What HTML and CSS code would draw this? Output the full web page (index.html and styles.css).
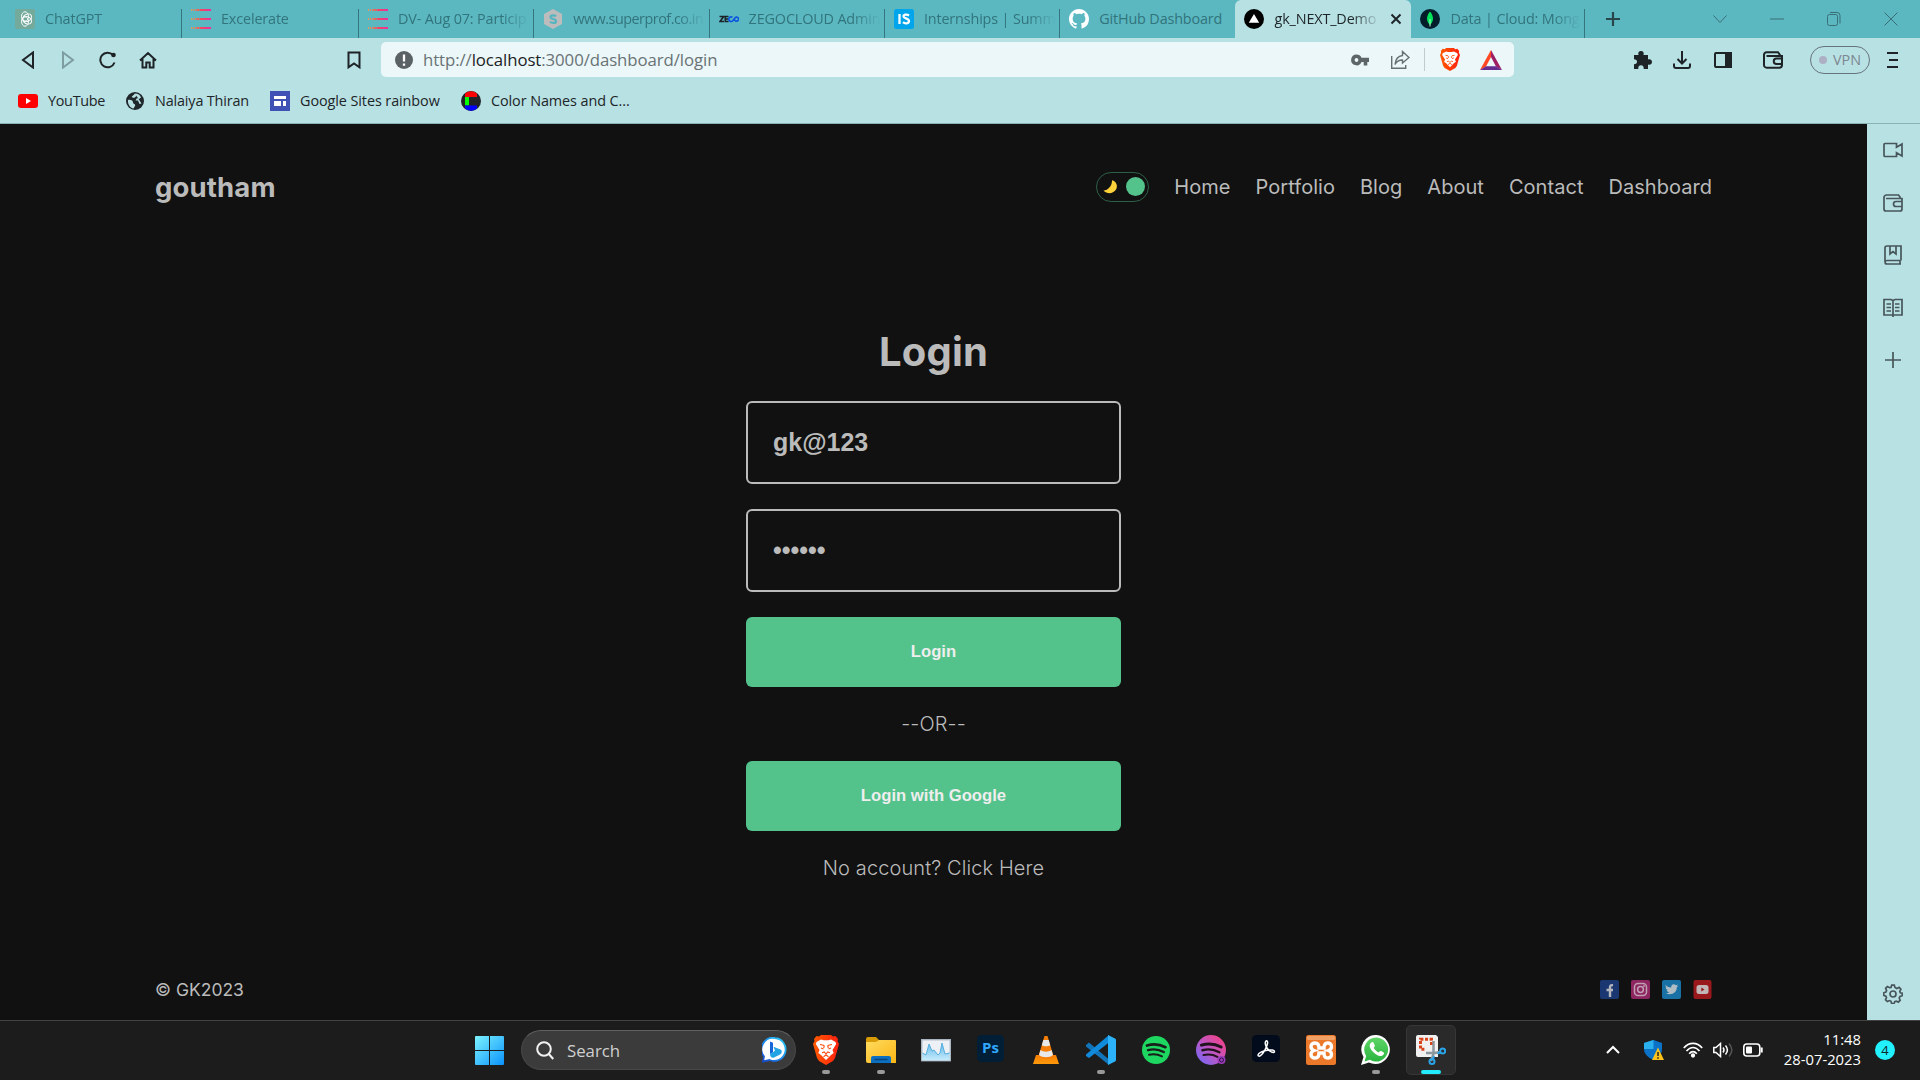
FILE: index.html
```html
<!DOCTYPE html>
<html lang="en">
<head>
<meta charset="utf-8">
<title>gk_NEXT_Demo</title>
<link rel="stylesheet" href="styles.css">
</head>
<body>
<svg class="defs" width="0" height="0" aria-hidden="true">
  <defs>
    <linearGradient id="bars"><stop offset="0" stop-color="#f09a50"/><stop offset=".5" stop-color="#f4475c"/><stop offset="1" stop-color="#ee2da0"/></linearGradient>
    <linearGradient id="win" x2="1" y2="1"><stop offset="0" stop-color="#7cf3ff"/><stop offset="1" stop-color="#0a92fb"/></linearGradient>
    <linearGradient id="brave"><stop offset="0" stop-color="#ff5a00"/><stop offset="1" stop-color="#ff1f10"/></linearGradient>
    <linearGradient id="folder" x2="1" y2="1"><stop offset="0" stop-color="#ffdb60"/><stop offset="1" stop-color="#fbb614"/></linearGradient>
    <linearGradient id="spot" x1="0" y1="1" x2="1" y2="0"><stop offset="0" stop-color="#6b6bff"/><stop offset=".5" stop-color="#c055c0"/><stop offset="1" stop-color="#ff3d78"/></linearGradient>
    <linearGradient id="bing" x1="1" y1="0" x2="0" y2="1"><stop offset="0" stop-color="#2bd0f0"/><stop offset=".5" stop-color="#1e8cf0"/><stop offset="1" stop-color="#1745c8"/></linearGradient>
    <linearGradient id="cone" x2="0" y2="1"><stop offset="0" stop-color="#f57c00"/><stop offset="1" stop-color="#ff9a0c"/></linearGradient>
    <linearGradient id="perf" x2="0" y2="1"><stop offset="0" stop-color="#5eb7e8"/><stop offset="1" stop-color="#c8ecfb"/></linearGradient>
    <linearGradient id="wa" x2="0" y2="1"><stop offset="0" stop-color="#5fd566"/><stop offset="1" stop-color="#2bb540"/></linearGradient>
    <symbol id="stack" viewBox="0 0 20 20"><g fill="url(#bars)"><path d="M0 0h1v2H0zM2 0h1v2H2zM4 0h1.5v2H4zM6 0h2v2H6zM8.500 0H20v2H8.500zM0 9h1v2H0zM2 9h1v2H2zM4 9h1.500v2H4zM6 9h2v2H6zM8.500 9H20v2H8.500zM0 18h1v2H0zM2 18h1v2H2zM4 18h1.500v2H4zM6 18h2v2H6zM8.500 18H20v2H8.500z"/></g></symbol>
    <symbol id="lion" viewBox="0 0 26 30"><path d="M6 1.500 8 0h10l2 1.500 2.500-.5L25 4l-.5 2 1.500 3-4 14-2 3-7 4-7-4-2-3L0 9l1.500-3L1 4l2.500-3z" fill="url(#brave)"/><path d="M8 4.500 3.500 7 2.800 9l3.700 6-1.200 3 2.700 2 5 5 5-5 2.700-2-1.200-3 3.700-6-.7-2L18 4.500l-2.500.8h-5z" fill="#fff"/><path d="m7 9.500 3.500.7.700.8-.5 2M19 9.500l-3.500.7-.7.800.5 2M8 13l2.500 1M18 13l-2.500 1M9 17.700l2.200-.7L13 19l1.800-2 2.200.7M10.500 21.700 13 20l2.500 1.700" fill="none" stroke="#ff4a0a" stroke-width="1.100"/></symbol>
    <symbol id="waves" viewBox="0 0 28 28"><path d="M5 9.500c6-1.800 13-1.200 18.500 1.700" stroke-width="2.700"/><path d="M6 14.200c5-1.300 11-.8 15.800 1.900" stroke-width="2.300"/><path d="M7 18.700c4.500-1 9-.5 13 1.700" stroke-width="1.900"/></symbol>
  </defs>
</svg>

<div class="tabs">
  <div class="tab first"><svg width="20" height="20"><rect width="20" height="20" rx="2" fill="#74aa9c"/><g fill="none" stroke="#fff" stroke-width="1"><ellipse cx="10" cy="7.500" rx="3.500" ry="4.700"/><ellipse cx="10" cy="7.500" rx="3.500" ry="4.700" transform="rotate(60 10 10)"/><ellipse cx="10" cy="7.500" rx="3.500" ry="4.700" transform="rotate(120 10 10)"/><ellipse cx="10" cy="12.500" rx="3.500" ry="4.700"/></g></svg><span>ChatGPT</span></div>
  <div class="tab second"><svg width="20" height="20"><use href="#stack"/></svg><span>Excelerate</span></div>
  <div class="tab"><svg width="20" height="20"><use href="#stack"/></svg><span>DV- Aug 07: Particip</span></div>
  <div class="tab tight"><svg width="20" height="20"><path d="m10 0 9 5v10l-9 5-9-5V5z" fill="#bcbcbc"/><path d="M13 7.300c-1-1-5.500-1.500-5.500.8S13 9.700 13 12.200s-4.500 2-6 .6" fill="none" stroke="#54b4bf" stroke-width="2.200"/></svg><span>www.superprof.co.in</span></div>
  <div class="tab"><svg width="20" height="20" fill="none" stroke-width="1.600"><path d="M.5 7.500h4.200L1 12.500h4M9.500 7.500H6.300v5h3.200M6.300 10h3" stroke="#1b2327"/><path d="M13.500 8.300a2.300 2.300 0 1 0 .5 3.200l2-2.600a2 2 0 1 1 0 2.500l-1.500-2" stroke="#0b55e0"/></svg><span>ZEGOCLOUD Admin</span></div>
  <div class="tab"><svg width="20" height="20"><rect width="20" height="20" rx="2.500" fill="#00a5ec"/><path d="M5.500 5v10M15 6.500c-2-1.500-5.500-1-5.500 1s5.500 1.800 5.500 4.500-4 3-6 1.200" fill="none" stroke="#fff" stroke-width="2.300"/></svg><span>Internships | Summe</span></div>
  <div class="tab last-before"><svg width="20" height="20" viewBox="0 0 16 16"><path fill="#fff" d="M8 0C3.580 0 0 3.580 0 8c0 3.540 2.290 6.530 5.470 7.590.4.070.55-.17.55-.38 0-.19-.01-.82-.01-1.490-2.010.37-2.530-.49-2.690-.94-.09-.23-.48-.94-.82-1.130-.28-.15-.68-.52-.01-.53.63-.01 1.080.58 1.230.82.72 1.210 1.870.87 2.330.66.070-.52.28-.87.51-1.070-1.780-.2-3.640-.89-3.640-3.950 0-.87.31-1.590.82-2.150-.08-.2-.36-1.020.08-2.120 0 0 .67-.21 2.200.82.640-.18 1.320-.27 2-.27s1.360.090 2 .27c1.530-1.040 2.200-.82 2.200-.82.440 1.100.16 1.920.080 2.120.510.560.82 1.270.82 2.150 0 3.070-1.870 3.750-3.650 3.950.290.250.54.730.54 1.480 0 1.070-.01 1.930-.01 2.200 0 .210.150.460.550.380A8.010 8.010 0 0 0 16 8c0-4.420-3.580-8-8-8"/></svg><span>GitHub Dashboard</span></div>
  <div class="tab active"><svg width="20" height="20"><circle cx="10" cy="10" r="10"/><path d="m10 5 5.200 8.700H4.800z" fill="#fff"/></svg><span>gk_NEXT_Demo</span><svg class="close" width="12" height="12"><path d="m1.500 1.500 9 9m0-9-9 9" stroke="#1d2528" stroke-width="2"/></svg></div>
  <div class="tab after"><svg width="20" height="20"><circle cx="10" cy="10" r="10" fill="#021e2b"/><path d="M10 2.500c4 5 4 9.500 0 13.500-4-4-4-8.500 0-13.500" fill="#00e45a"/><path d="M10 10v7.500" stroke="#b8f5cf"/></svg><span>Data | Cloud: Mong</span></div>
  <svg class="plus" width="16" height="16"><path d="M8 1v14M1 8h14" stroke="#28464c" stroke-width="2.200"/></svg>
  <div class="window-controls"><svg width="14" height="20"><path d="m.5 6.500 6.500 7 6.500-7"/></svg><svg width="14" height="20"><path d="M0 10h14"/></svg><svg width="14" height="20"><rect x=".5" y="5.500" width="10" height="11" rx="2"/><path d="M3 3.500h7a3 3 0 0 1 3 3v8"/></svg><svg width="14" height="20"><path d="m.5 3.500 13 13m0-13-13 13"/></svg></div>
</div>

<div class="toolbar">
  <svg class="back" width="14" height="18"><path d="M12 1.500v15L2 9z"/></svg>
  <svg class="forward" width="14" height="18"><path d="M2 1.500v15L12 9z"/></svg>
  <svg class="reload" width="18" height="18"><path d="M15.500 11.500A7.300 7.300 0 1 1 14 4" /><circle cx="14.500" cy="4" r="2.300" fill="#1d2326" stroke="none"/></svg>
  <svg class="home" width="18" height="18"><path d="M1 9.500 9 2l8 7.500M3.500 8v8.500h3.800v-5h3.400v5h3.800V8"/></svg>
  <svg class="save" width="14" height="18"><path d="M1.500 1.500h11v14.800L7 12.500l-5.500 3.800z"/></svg>
  <div class="address">
    <svg width="18" height="18"><circle cx="9" cy="9" r="9" fill="#5b6266"/><path d="M9 3.500v7M9 12.500v2.300" stroke="#fff" stroke-width="2.300"/></svg>
    <div class="url">http://<b>localhost</b>:3000/dashboard/login</div>
    <svg class="key" width="18" height="12"><path fill="#5e6569" fill-rule="evenodd" d="M5.500.5a5.400 5.400 0 0 1 5 3.300H18V8h-1.700v3.500h-3.600V8h-2.200a5.400 5.400 0 1 1-5-7.500m0 3.600a1.900 1.900 0 1 0 0 3.800 1.900 1.900 0 0 0 0-3.800"/></svg>
    <svg class="share" width="19" height="19"><path d="M.7 6v12.300h14V15M11.500 1.500l6.500 6-6.500 5.500V10c-3.500 0-6 1.500-7.500 4.500.5-5 3-8.500 7.500-9z"/></svg>
    <i></i>
    <svg class="shield" width="20" height="23" viewBox="0 0 26 30"><use href="#lion"/></svg>
    <svg class="bat" width="22" height="20"><path d="M11 0 0 20l6-3.500L11 7z" fill="#ff4724"/><path d="m11 0 11 20-6-3.500L11 7z" fill="#9e1f63"/><path d="M0 20h22l-6-3.700H6z" fill="#662d91"/></svg>
  </div>
  <svg class="puzzle" width="19" height="18"><path fill="#1d2326" d="M1 4h4.500C4.700 1.500 6 0 8 0s3.300 1.500 2.500 4H15v4.500c2.300-.8 4 .5 4 2.500s-1.700 3.200-4 2.500V18h-4.300c.3-2.300-.7-3.800-2.700-3.800S5 15.700 5.300 18H1v-4.800c2-.2 3-1 3-2.500S3 8.500 1 8.300z"/></svg>
  <svg class="download" width="18" height="18"><path d="M9 0v12M4.500 8 9 12.500 13.500 8M1 12.500V15a2 2 0 0 0 2 2h12a2 2 0 0 0 2-2v-2.500"/></svg>
  <svg class="panel" width="18" height="16"><rect x="1" y="1" width="16" height="14" rx="1"/><path d="M12 1h5v14h-5z" fill="#1d2326"/></svg>
  <svg class="wallet" width="20" height="18"><path d="M17 5.500V4L15 1.200H3.500A2.500 2.500 0 0 0 1 3.700V14a2.700 2.700 0 0 0 2.700 2.700h12.600A2.700 2.700 0 0 0 19 14V5H3.500M19 7.500h-5.500a2.700 2.700 0 0 0 0 5.500H19"/></svg>
  <div class="vpn"><i></i>VPN</div>
  <svg class="menu" width="12" height="18"><path d="M0 2h11M2 9h9M0 16h11"/></svg>
</div>

<div class="bookmarks">
  <div class="b1"><svg width="20" height="20"><rect y="3" width="20" height="14" rx="3" fill="#f00"/><path d="m8 7 5 3-5 3z" fill="#fff"/></svg>YouTube</div>
  <div class="b2"><svg width="18" height="18"><circle cx="9" cy="9" r="9" fill="#20272b"/><path d="M2 8c3-.5 5 .5 5 2.500s3 1 2 3.500l-1.500 2.500C4 16 1.500 12 2 8M9 1.500c3 0 5 1.500 6 4l-2 1.500-2-1-1.500 2.500H12L13.500 12l2-.5M9 1.500 10.500 4 8 6 5.500 5" fill="#b8e1e4"/></svg>Nalaiya Thiran</div>
  <div class="b3"><svg width="20" height="20"><path d="M0 0h20v20H0z" fill="#3f51b5"/><path d="M4 5h12v3H4zM4 10h7v5H4zM13 10h3v5h-3z" fill="#fff"/></svg>Google Sites rainbow</div>
  <div class="b4"><svg width="20" height="20"><circle cx="10" cy="10" r="10" fill="#202226"/><path d="M4 2.500A10 10 0 0 1 16 2.500V6H4z" fill="#f00"/><path d="M4 6h4v8.500H4z" fill="#0f0"/><path d="M4 14.500h12v3a10 10 0 0 1-12 0z" fill="#00f"/></svg>Color Names and C...</div>
</div>

<main class="view">
  <div class="page">
    <header class="nav">
      <a class="logo">goutham</a>
      <nav>
        <div class="toggle"><svg width="15" height="14"><path d="M9 .3c4.500 1 6.300 6 3.700 9.800C9.800 14 4 14.300.5 10.500c4 .3 8.800-4.500 8.500-10.200" fill="#fdd13a"/></svg><i></i></div>
        <a>Home</a><a>Portfolio</a><a>Blog</a><a>About</a><a>Contact</a><a>Dashboard</a>
      </nav>
    </header>
    <section class="login">
      <h1>Login</h1>
      <input type="text" value="gk@123">
      <input type="password" value="gk1234">
      <button>Login</button>
      <p>--OR--</p>
      <button>Login with Google</button>
      <p>No account? Click Here</p>
    </section>
    <footer>
      <div>© GK2023</div>
      <div class="social">
        <svg width="19" height="19"><rect width="19" height="19" rx="2" fill="#1b3772"/><path d="M10 17V7.500c0-2 .8-2.500 3-2.300M6.500 10H13" fill="none" stroke="#b4b6bd" stroke-width="2.400"/></svg>
        <svg width="19" height="19"><rect width="19" height="19" rx="2" fill="#8d2560"/><g fill="none" stroke="#c0a0b2" stroke-width="1.500"><rect x="3.500" y="3.500" width="12" height="12" rx="3.500"/><circle cx="9.500" cy="9.500" r="2.900"/></g><circle cx="13" cy="6" r=".9" fill="#c0a0b2"/></svg>
        <svg width="19" height="19"><rect width="19" height="19" rx="2" fill="#1870a4"/><path d="M3.500 5c1.500 1.700 3.500 2.500 5.700 2.500C9 4.500 12 3.500 13.800 5.200l2-.7-1 1.700 1.400-.3-1.500 1.600c.2 5-5 8.500-11 5.800 1.500 0 2.700-.4 3.500-1.100-1.500-.2-2.200-1-2.500-2l1.200-.1C4.300 9.500 3.700 8.500 3.700 7.300l1.200.3C3.700 6.800 3.300 6 3.500 5" fill="#b0bdc5"/></svg>
        <svg width="19" height="19"><rect x=".5" width="18" height="19" rx="2" fill="#98181c"/><rect x="3.500" y="5" width="12" height="9" rx="2.500" fill="#c2b6b7"/><path d="M8.300 7.500v4l3.200-2z" fill="#98181c"/></svg>
      </div>
    </footer>
  </div>
  <aside>
    <svg width="20" height="20"><path d="M1 4.500a1 1 0 0 1 1-1h11.500v3.800L19 4v12l-5.500-3.300v3.800H2a1 1 0 0 1-1-1z"/></svg>
    <svg width="20" height="20"><path d="M17 5.500V4l-1.500-2H3.500A2.500 2.500 0 0 0 1 4.500V16a2 2 0 0 0 2 2h14a2 2 0 0 0 2-2V5.500H3M19 8.500h-6a2.500 2.500 0 0 0 0 5h6"/></svg>
    <svg width="20" height="20"><path d="M18 15.500V1H4a2 2 0 0 0-2 2v14a2 2 0 0 0 2 2h14M17 19v-3.500H4a2 2 0 0 0-2 1.800M7 1v8l3-2.500L13 9V1"/></svg>
    <svg width="20" height="20"><path d="M10 19v-2H1V1.500h7l2 1 2-1h7V17h-9M10 3v14M3.500 6H8M3.500 9.500H8M3.500 13H8M12 6h4.500M12 9.500h4.500M12 13h4.500"/></svg>
    <svg width="20" height="20"><path d="M10 2v16M2 10h16"/></svg>
    <svg class="gear" width="20" height="20"><circle cx="10" cy="10" r="3"/><path d="M8 3.500 8.700 1.200h2.600L12 3.500l1.800 1 2.300-1.100 1.800 1.800L16.800 7.400l.5 1.300 2 .5v2.500l-2.300.8-.8 1.500 1 2.200-1.900 1.900-2.100-1-1.500.6-.7 2H8.700L8 17.300l-1.500-.7-2.200 1-1.800-1.800 1-2.300-.6-1.400-2.200-.7V8.800l2.200-.7.7-1.500-1-2.300 1.800-1.700 2.200 1.100z"/></svg>
  </aside>
</main>

<div class="taskbar">
  <svg class="start" width="29" height="29"><path fill="url(#win)" d="M1 0h13v14H0V1a1 1 0 0 1 1-1M15 0h13a1 1 0 0 1 1 1v13H15zM0 15h14v14H1a1 1 0 0 1-1-1zM15 15h14v13a1 1 0 0 1-1 1H15z"/></svg>
  <div class="search"><svg width="18" height="19"><circle cx="8" cy="8" r="6.800" fill="none" stroke="#f2f2f2" stroke-width="2"/><path d="m12.800 13 4.500 5" stroke="#f2f2f2" stroke-width="2.200"/></svg><span>Search</span>
    <svg class="bing" width="26" height="26"><path d="M13 1a11.500 11.500 0 1 1-5.500 22L1 24.500l1-5A11.500 11.500 0 0 1 13 1" fill="#fff" stroke="url(#bing)" stroke-width="1.800"/><path d="m8 4.500 3 1.200v9.500L8 17z" fill="#1764d8"/><path d="m8 17 5-3.200-1.500-4 7 2.700c2 1 1.500 4-.5 5L12 20.500c-2 1-4-1-4-3.500" fill="#25a4e4"/></svg>
  </div>
  <div class="apps">
    <div class="run"><svg width="26" height="30" viewBox="0 0 26 30"><use href="#lion"/></svg></div>
    <div class="run"><svg width="30" height="30"><path d="M0 4a2 2 0 0 1 2-2h8l3 3h15v8H0z" fill="#d89a05"/><path d="M0 7h10l3-2h16a1 1 0 0 1 1 1v22H2a2 2 0 0 1-2-2z" fill="url(#folder)"/><path d="M5 28v-5a2 2 0 0 1 2-2h16a2 2 0 0 1 2 2v5z" fill="#0d6fc0"/><path d="M8.500 24.500h13" stroke="#07447c" stroke-width="1.500"/></svg></div>
    <div><svg width="30" height="30"><rect x=".7" y="4.700" width="28.600" height="21" fill="#edf1f5" stroke="#aab5c2" stroke-width="1.400"/><path d="M1.500 18 5 20l3-11 3 7 2-1 4 5 2-2 2-10 3 11 4.500-1v7.500h-27z" fill="url(#perf)"/><path d="M1.500 18 5 20l3-11 3 7 2-1 4 5 2-2 2-10 3 11 4.500-1" fill="none" stroke="#58aee0"/></svg></div>
    <div><div class="ps">Ps</div></div>
    <div><svg width="26" height="30"><path d="M3 20h20l3 9H0z" fill="url(#cone)"/><path d="M11.500 1h3l6 20c-2 4-13 4-15 0z" fill="#f47e08"/><path d="m10.300 5 5.400 0 1.500 5.200c-2 1.500-6.500 1.500-8.400 0zM7.500 15c3 2.200 8 2.200 11 0l1.500 5c-3 3-11 3-14 0z" fill="#e8e8e8"/></svg></div>
    <div class="run"><svg width="30" height="30"><path d="m0 10 3-2.500 20 17V30L0 11.500z" fill="#1275ba"/><path d="M0 19.500V21l3 2L23 7.500V0z" fill="#108ada"/><path d="m22 0 7 3.500a2 2 0 0 1 1 1.500v20a2 2 0 0 1-1 1.500L22 30z" fill="#2cb2f8"/></svg></div>
    <div><svg width="28" height="28"><circle cx="14" cy="14" r="14" fill="#1ed760"/><g fill="none" stroke="#181e1a" stroke-linecap="round"><use href="#waves"/></g></svg></div>
    <div><svg width="30" height="30"><circle cx="15" cy="15" r="15" fill="url(#spot)"/><g fill="none" stroke="#20131d" stroke-linecap="round"><use href="#waves" width="30" height="30"/></g><circle cx="25.500" cy="25" r="4" fill="#9c3bbb"/><circle cx="25.500" cy="25" r="2" fill="none" stroke="#301345"/></svg></div>
    <div><svg class="lift" width="28" height="28"><rect width="28" height="27" rx="4.500" fill="#020b1c"/><path d="M6 20c0-2 5-4 9-4.700 4-.6 7.500-.3 7.500 1.200s-3 1-5-.7c-2.500-2-5-6-4-9 .7-2 2.500-.8 2 1.700-.8 4-4.200 10.500-7 12.200C7.300 21.500 6 21.300 6 20z" fill="none" stroke="#fff" stroke-width="1.500"/></svg></div>
    <div><svg width="30" height="30"><rect width="30" height="30" rx="2.500" fill="#ec7829"/><rect x="1" y="1" width="28" height="4" rx="1.500" fill="#f1a066"/><path d="M13 13c0-7-8-6-8-1.500 0 2 1.500 3.500 3 4-1.500.5-3 2-3 4 0 4.500 8 5.500 8-1.500h5c0 7 7.500 6 7.500 1.500 0-2-1.500-3.500-3-4 1.500-.5 3-2 3-4 0-4.500-7.500-5.500-7.500 1.500z" fill="none" stroke="#fff" stroke-width="3.400"/></svg></div>
    <div class="run"><svg width="30" height="30"><path d="M15.500 0A14.500 14.500 0 1 1 8 27.500L0 30l2.500-8A14.500 14.500 0 0 1 15.500 0" fill="#fff"/><path d="M15.500 2.500A12 12 0 1 1 9 24.800l-5.500 1.700L5.200 21A12 12 0 0 1 15.500 2.500" fill="url(#wa)"/><path d="M10.500 7.500c-3 2-2 5.500 1.500 9.300s8 6 10.500 2.700c1-1.300.5-1.800-.5-2.500l-2-1c-1-.5-1.500.8-2.300 1.400-2-.7-4-2.700-5-4.700.7-.8 1.500-1.400 1-2.500l-1-2.300c-.4-.9-1.200-1-2.200-.4" fill="#fff"/></svg></div>
    <div class="current"><svg width="30" height="30"><path d="M2 0h18l2 2v20H2a2 2 0 0 1-2-2V2a2 2 0 0 1 2-2" fill="#f1f1f1"/><path d="M15.500 10V4.300H4.500v10H9" fill="none" stroke="#d9431a" stroke-width="3" stroke-dasharray="3 1.600"/><path d="M17.500 6v13L15 26M10 18h8.500l6-1" fill="none" stroke="#8c979e" stroke-width="2.500"/><g fill="none" stroke="#2aa4e8" stroke-width="2"><circle cx="16" cy="26.500" r="2.500"/><circle cx="26.700" cy="16" r="2.500"/><path d="m17 24 1-3M21.500 18.500l3-1"/></g></svg></div>
  </div>
  <div class="tray">
    <svg class="chev" width="14" height="10"><path d="m1 8 6-6 6 6" fill="none" stroke="#fff" stroke-width="2"/></svg>
    <svg class="def" width="20" height="21"><path d="M9.500 0 18 3v6c0 5-3 8.500-8.500 11C4 17.500 0 14 0 9V3z" fill="#0b72c8"/><path d="M9.500 0v9H0V3z" fill="#2bb0ee"/><path d="m14 7.500 6 12.500H8z" fill="#fcc21b"/><path d="M14 12v4M14 17.300v1.500" stroke="#222" stroke-width="1.500"/></svg>
    <svg class="wifi" width="20" height="16" fill="none" stroke="#fff" stroke-width="1.700"><path d="M.8 6C6-.2 14-.2 19.200 6M3.500 9C7.500 4.300 12.500 4.300 16.500 9M6.200 11.700c2.300-2.800 5.300-2.800 7.600 0"/><circle cx="10" cy="13.500" r="1.300" fill="#fff"/></svg>
    <svg class="sound" width="20" height="16" fill="none" stroke="#fff" stroke-width="1.500"><path d="M.8 5.500H3L7.500 1.500v13L3 10.500H.8z"/><path d="M10 5.500c1.200 1.500 1.200 3.500 0 5M12.500 3.500c2.300 2.700 2.300 6.300 0 9"/><path d="M16 1.500c3.500 4 3.500 9 0 13" stroke="#555"/></svg>
    <svg class="bat2" width="20" height="14"><rect x=".8" y="1" width="16" height="12" rx="3" fill="none" stroke="#fff" stroke-width="1.600"/><rect x="3" y="3.500" width="6" height="7" rx="1" fill="#fff"/><path d="M18.700 4.500v5" stroke="#fff" stroke-width="2"/></svg>
    <div class="clock"><div>11:48</div><div>28-07-2023</div></div>
    <div class="count">4</div>
  </div>
</div>
</body>
</html>
```
FILE: styles.css
```css
* { box-sizing: border-box; }
body { margin: 0; width: 1920px; height: 1080px; overflow: hidden; display: flex; flex-direction: column; background: #111; font-family: "Open Sans", "Noto Sans", sans-serif; font-size: 14.400px; }
.defs { position: absolute; }
svg { display: block; flex: none; }

/* tab strip */
.tabs { height: 38px; background: #5bb8c1; display: flex; align-items: center; }
.tab { width: 175.300px; height: 38px; padding: 0 4px 0 9px; display: flex; align-items: center; gap: 10px; color: #32747c; position: relative; letter-spacing: -.15px; }
.tab span { flex: 1; overflow: hidden; white-space: nowrap; padding-bottom: 2px; -webkit-mask-image: linear-gradient(90deg, #000 calc(100% - 28px), transparent); mask-image: linear-gradient(90deg, #000 calc(100% - 28px), transparent); }
.tab::after { content: ""; position: absolute; right: 0; top: 9px; width: 1px; height: 29px; background: #35757d; }
.tab.first { width: 182px; padding-left: 15px; }
.tab.second { width: 177px; }
.tab.tight { letter-spacing: -.5px; }
.tab.last-before::after, .tab.active::after { display: none; }
.tab.last-before span { -webkit-mask-image: none; mask-image: none; }
.tab.active { width: 176px; background: #b8e1e4; color: #1d2528; border-radius: 6px 6px 0 0; padding-right: 9px; }
.tab.after { width: 174px; }
.plus { margin-left: 20px; }
.window-controls { margin-left: auto; padding-right: 22px; display: flex; gap: 43px; }
.window-controls svg { fill: none; stroke: #3a6f77; }

/* navigation row */
.toolbar { height: 43px; background: #b8e1e4; display: flex; align-items: center; padding-left: 21px; }
.toolbar > svg { fill: none; stroke: #1d2326; stroke-width: 2; }
.toolbar .forward { margin-left: 26px; stroke: #7e9da1; }
.reload { margin-left: 24px; }
.home { margin-left: 22px; }
.save { margin-left: 190px; }
.address { width: 1133px; height: 35px; margin-left: 20px; border-radius: 5px; background: #ebf7f8; display: flex; align-items: center; padding: 0 12px 0 14px; }
.url { flex: 1; margin-left: 10px; font-size: 16.800px; color: #697275; letter-spacing: -.08px; }
.url b { font-weight: 400; color: #1c2224; }
.share { margin-left: 22px; fill: none; stroke: #667074; stroke-width: 1.400; }
.address i { width: 1px; height: 23px; background: #c0cbcd; margin: 0 15px 0 14px; }
.bat { margin-left: 20px; }
.toolbar .puzzle { margin-left: 119px; stroke: none; }
.download { margin-left: 21px; }
.panel { margin-left: 23px; }
.wallet { margin-left: 31px; }
.vpn { width: 60px; height: 28px; margin-left: 27px; border: 1.500px solid #66727f; border-radius: 14px; display: flex; align-items: center; justify-content: center; gap: 6px; color: #7d8790; letter-spacing: 0; }
.vpn i { width: 8px; height: 8px; border-radius: 50%; background: #adb0c4; }
.menu { margin-left: 17px; }

.bookmarks { height: 43px; background: #b8e1e4; border-bottom: 1px solid #8bb2b6; display: flex; align-items: center; padding: 0 18px 3px; color: #1d2528; letter-spacing: -.08px; }
.bookmarks div { display: flex; align-items: center; gap: 10px; white-space: nowrap; }
.bookmarks .b1 { width: 108px; letter-spacing: -.3px; }
.bookmarks .b2 { width: 144px; gap: 11px; letter-spacing: -.15px; }
.bookmarks .b3 { width: 191px; }

/* page area */
.view { height: 896px; display: flex; }
.page { width: 1867px; background: #111; color: #bbb; padding: 0 155px; display: flex; flex-direction: column; font-family: Inter, sans-serif; font-size: 20px; }
.nav { height: 125px; display: flex; align-items: center; justify-content: space-between; }
.logo { font-size: 27.500px; font-weight: 700; letter-spacing: .15px; }
.nav nav { display: flex; align-items: center; gap: 25px; letter-spacing: .04px; }
.toggle { width: 53px; height: 30px; border: 1.500px solid #53c28b70; border-radius: 37px; display: flex; align-items: center; justify-content: space-between; padding: 0 3px 0 6px; }
.toggle i { width: 19px; height: 19px; border-radius: 50%; background: #53c28b; }
.login { flex: 1; display: flex; flex-direction: column; align-items: center; gap: 25px; padding-top: 79px; }
.login h1 { margin: 0; font-size: 40px; line-height: 48px; font-weight: 700; letter-spacing: .2px; }
.login input { width: 375px; height: 83px; padding: 25px; background: transparent; border: 2px solid #bbb; border-radius: 6px; color: #bbb; font: 700 25px "Liberation Sans", sans-serif; outline: none; }
.login button { width: 375px; height: 70px; border: 0; border-radius: 6px; background: #53c28b; color: #eee; font: 700 16.667px "Liberation Sans", sans-serif; }
.login p { margin: 0; line-height: 24px; font-weight: 300; letter-spacing: .1px; }
footer { height: 62px; display: flex; align-items: center; justify-content: space-between; font-size: 17.500px; }
.social { display: flex; gap: 12px; }
aside { width: 53px; background: #b8e1e4; display: flex; flex-direction: column; align-items: center; gap: 32.500px; padding: 16px 1px 16px 0; }
aside svg { fill: none; stroke: #47565b; stroke-width: 1.700; }
aside .gear { margin-top: auto; }

/* taskbar */
.taskbar { height: 60px; background: #1c1c1c; border-top: 1px solid #424242; display: flex; align-items: center; padding: 0 0 1px 475px; color: #fff; }
.search { width: 275px; height: 40px; margin-left: 17px; border-radius: 20px; border: 1px solid #484848; border-top-color: #616161; background: #3b3b3b; display: flex; align-items: center; padding: 0 7px 0 14px; font-size: 16.800px; color: #d0d0d0; }
.search span { margin-left: 13px; flex: 1; }
.apps { display: flex; margin-left: 2px; }
.apps > div { width: 55px; height: 50px; display: flex; align-items: center; justify-content: center; position: relative; }
.apps > .run::after, .apps > .current::after { content: ""; position: absolute; bottom: 1px; left: 24px; width: 8px; height: 4px; border-radius: 2px; background: #999; }
.apps > .current { width: 50px; margin-left: 3px; background: #2a2a2a; border: 1px solid #363636; border-radius: 5px; }
.apps > .current::after { left: 14px; bottom: 0; width: 20px; background: #22eaff; }
.ps { width: 27px; height: 27px; margin-bottom: 3px; border-radius: 4.500px; background: #001e36; color: #31a8ff; font: 700 15px/25px "Open Sans", sans-serif; text-align: center; }
.lift { margin-bottom: 3px; }
.tray { margin-left: auto; display: flex; align-items: center; padding-right: 25px; }
.def { margin-left: 24px; }
.wifi { margin-left: 19px; }
.sound, .bat2 { margin-left: 10px; }
.clock { width: 98px; margin-top: -2px; text-align: right; line-height: 20px; font-size: 14.800px; }
.count { width: 20px; height: 20px; margin-left: 14px; border-radius: 50%; background: #22f2ff; color: #10282c; text-align: center; font-size: 13px; line-height: 20px; }
```
